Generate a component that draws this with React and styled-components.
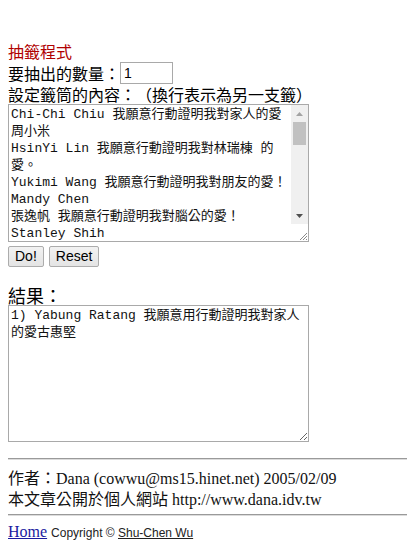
import React from 'react';
import styled, { createGlobalStyle } from 'styled-components';

const Global = createGlobalStyle`
  html, body { background: #fff; }
  body {
    margin: 8px;
    font-family: "Noto Sans CJK TC", sans-serif;
    color: #000;
    overflow: hidden;
    text-spacing-trim: space-all;
  }
`;

const Page = styled.div`
  padding-top: 33px;
`;

const Title = styled.div`
  font-size: 16px;
  line-height: 21px;
  color: #b00000;
`;

const FieldRow = styled.div`
  display: flex;
  align-items: center;
  height: 22px;
  font-size: 16px;
  line-height: 20px;
`;

const NumberInput = styled.input`
  box-sizing: border-box;
  width: 53px;
  height: 22px;
  margin: 0;
  padding: 0 3px;
  border: 1px solid #a9a9a9;
  font: 14px "Liberation Sans", sans-serif;
  color: #000;
  outline: none;
  background: #fff;
`;

const Label = styled.div`
  font-size: ${(p) => p.$size || 16}px;
  line-height: 20px;
  margin-top: ${(p) => p.$top || 0}px;
`;

const Frame = styled.div`
  display: flex;
  box-sizing: border-box;
  width: 301px;
  height: ${(p) => p.$h}px;
  border: 1px solid #a9a9a9;
  background: #fff;
`;

const TextBox = styled.textarea`
  display: block;
  box-sizing: border-box;
  width: ${(p) => (p.$framed ? 'auto' : '301px')};
  flex: 1;
  height: ${(p) => (p.$framed ? '100%' : `${p.$h}px`)};
  margin: 0;
  padding: 1px 2px;
  border: ${(p) => (p.$framed ? '0' : '1px solid #a9a9a9')};
  font-family: "Liberation Mono", "Noto Sans CJK TC", monospace;
  font-size: 13px;
  line-height: 17px;
  color: #111;
  background: #fff;
  outline: none;
  resize: ${(p) => (p.$framed ? 'none' : 'both')};
  overflow: hidden;
  text-spacing-trim: space-all;
`;

const ScrollBar = styled.div`
  display: flex;
  flex-direction: column;
  width: 17px;
  background: #f0f0f0;
`;

const ArrowButton = styled.div`
  display: flex;
  align-items: center;
  justify-content: center;
  height: 17px;
  flex: none;
`;

const Track = styled.div`
  flex: 1;
  display: flex;
  flex-direction: column;
  padding: 0 2px;
`;

const Thumb = styled.div`
  height: 23px;
  background: #c1c1c1;
`;

const Corner = styled.div`
  display: flex;
  align-items: flex-end;
  justify-content: flex-end;
  height: 17px;
  flex: none;
  background: #fff;
`;

const ButtonRow = styled.div`
  display: flex;
  gap: 5px;
  margin-top: 4px;
`;

const Button = styled.button`
  box-sizing: border-box;
  height: 21px;
  margin: 0;
  padding: 0 6px;
  border: 1px solid #acacac;
  border-radius: 2px;
  background: linear-gradient(#f2f2f2, #e4e4e4);
  font: 14px/19px "Liberation Sans", sans-serif;
  color: #000;
`;

const Divider = styled.hr`
  height: 0;
  margin: ${(p) => p.$top}px -8px 0 0;
  border: 0;
  border-top: 1px solid #9a9a9a;
  border-bottom: 1px solid #dcdcdc;
`;

const Info = styled.div`
  margin-top: 8px;
  font-family: "Liberation Serif", "Noto Sans CJK TC", serif;
  font-size: 16px;
  line-height: 21px;
  color: #111;
`;

const FootLine = styled.div`
  margin-top: 6px;
  font-family: "Liberation Serif", serif;
  font-size: 16px;
  line-height: 20px;
`;

const HomeLink = styled.a`
  color: #1a1aa0;
  text-decoration: underline;
`;

const Copy = styled.span`
  font-family: "Liberation Sans", sans-serif;
  font-size: 12px;
  color: #222;
  margin-left: 4px;
`;

const CopyLink = styled.a`
  color: #222;
  text-decoration: underline;
`;

const entries = [
  'Chi-Chi Chiu 我願意行動證明我對家人的愛周小米',
  'HsinYi Lin 我願意行動證明我對林瑞棟 的愛。',
  'Yukimi Wang 我願意行動證明我對朋友的愛！',
  'Mandy Chen',
  '張逸帆 我願意行動證明我對腦公的愛！',
  'Stanley Shih',
  'Kate Lin 我願意行動證明我對家人的愛！',
  'Yabung Ratang 我願意用行動證明我對家人的愛古惠堅',
  'Amy Wang 我願意行動證明我對爸媽的愛！',
  'Jerry Huang 我願意行動證明我對老婆的愛',
  '陳怡君 我願意行動證明我對朋友的愛！',
  'Vivian Tsai',
  'Peter Lee 我願意行動證明我對孩子的愛！',
  '林美玲 我願意行動證明我對家人的愛',
];

function Scroller() {
  return (
    <ScrollBar>
      <ArrowButton>
        <svg width="7" height="4" viewBox="0 0 7 4">
          <path d="M0 4 L3.5 0 L7 4 Z" fill="#a3a3a3" />
        </svg>
      </ArrowButton>
      <Track>
        <Thumb />
      </Track>
      <ArrowButton>
        <svg width="7" height="4" viewBox="0 0 7 4">
          <path d="M0 0 L7 0 L3.5 4 Z" fill="#505050" />
        </svg>
      </ArrowButton>
      <Corner>
        <svg width="10" height="10" viewBox="0 0 10 10">
          <path d="M9 2 L2 9 M9 5 L5 9 M9 8 L8 9" stroke="#8a8a8a" strokeWidth="1" />
        </svg>
      </Corner>
    </ScrollBar>
  );
}

export default function App() {
  return (
    <>
      <Global />
      <Page>
        <Title>抽籤程式</Title>
        <FieldRow>
          要抽出的數量：
          <NumberInput type="text" defaultValue="1" />
        </FieldRow>
        <Label>設定籤筒的內容：（換行表示為另一支籤）</Label>
        <Frame $h={138}>
          <TextBox $framed spellCheck={false} defaultValue={entries.join('\n')} />
          <Scroller />
        </Frame>
        <ButtonRow>
          <Button type="button">Do!</Button>
          <Button type="button">Reset</Button>
        </ButtonRow>
        <Label $size={18} $top={18}>結果：</Label>
        <TextBox
          $h={137}
          spellCheck={false}
          readOnly
          defaultValue="1) Yabung Ratang 我願意用行動證明我對家人的愛古惠堅"
        />
        <Divider $top={16} />
        <Info>
          <div>作者：Dana (cowwu@ms15.hinet.net) 2005/02/09</div>
          <div>本文章公開於個人網站 http://www.dana.idv.tw</div>
        </Info>
        <Divider $top={4} />
        <FootLine>
          <HomeLink href="#">Home</HomeLink>
          <Copy>
            Copyright © <CopyLink href="#">Shu-Chen Wu</CopyLink>
          </Copy>
        </FootLine>
      </Page>
    </>
  );
}
